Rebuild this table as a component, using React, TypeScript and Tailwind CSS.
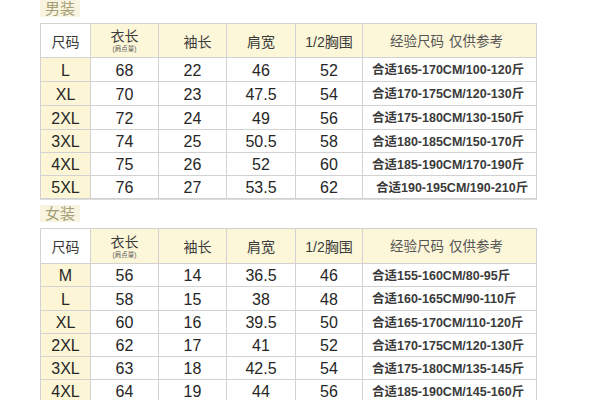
import React from "react";

type Row = { size: string; a: string; b: string; c: string; d: string; rec: string; h: number; pad?: number };

const men: Row[] = [
  { size: "L", a: "68", b: "22", c: "46", d: "52", rec: "合适165-170CM/100-120斤", h: 24 },
  { size: "XL", a: "70", b: "23", c: "47.5", d: "54", rec: "合适170-175CM/120-130斤", h: 24 },
  { size: "2XL", a: "72", b: "24", c: "49", d: "56", rec: "合适175-180CM/130-150斤", h: 24 },
  { size: "3XL", a: "74", b: "25", c: "50.5", d: "58", rec: "合适180-185CM/150-170斤", h: 23 },
  { size: "4XL", a: "75", b: "26", c: "52", d: "60", rec: "合适185-190CM/170-190斤", h: 23 },
  { size: "5XL", a: "76", b: "27", c: "53.5", d: "62", rec: "合适190-195CM/190-210斤", h: 23, pad: 13 },
];

const women: Row[] = [
  { size: "M", a: "56", b: "14", c: "36.5", d: "46", rec: "合适155-160CM/80-95斤", h: 23 },
  { size: "L", a: "58", b: "15", c: "38", d: "48", rec: "合适160-165CM/90-110斤", h: 24 },
  { size: "XL", a: "60", b: "16", c: "39.5", d: "50", rec: "合适165-170CM/110-120斤", h: 23 },
  { size: "2XL", a: "62", b: "17", c: "41", d: "52", rec: "合适170-175CM/120-130斤", h: 23 },
  { size: "3XL", a: "63", b: "18", c: "42.5", d: "54", rec: "合适175-180CM/135-145斤", h: 23 },
  { size: "4XL", a: "64", b: "19", c: "44", d: "56", rec: "合适185-190CM/145-160斤", h: 23 },
];

const font = { fontFamily: '"Liberation Sans", Arial, "Noto Sans CJK SC", sans-serif' };

function Label({ text }: { text: string }) {
  return (
    <div className="w-[40px] h-[17px] bg-[#f8f4df] flex items-center justify-center text-[15px] leading-none text-[#a59f78] tracking-[0px]">
      {text}
    </div>
  );
}

function Table({ rows, headH }: { rows: Row[]; headH: number }) {
  const cell = "border-r border-b border-[#d2d2d2] flex items-center justify-center shrink-0";
  return (
    <div className="w-[497px] border-t border-l border-[#d2d2d2] shadow-[0_1px_0_#dcdcdc]">
      <div className="flex" style={{ height: headH }}>
        <div className={`${cell} w-[50px] bg-white text-[14px] text-[#3a3a3a] pt-[3px]`}>尺码</div>
        <div className={`${cell} w-[68px] bg-[#fdf7d9] flex-col text-[#3a3a3a]`}>
          <span className="text-[14px] leading-[16px]">衣长</span>
          <span className="text-[6.5px] leading-[8px] text-[#555] mt-[1px]">(肩点量)</span>
        </div>
        <div className={`${cell} w-[68px] bg-[#fdf7d9] text-[14px] text-[#3a3a3a] pt-[3px] pl-[10px]`}>袖长</div>
        <div className={`${cell} w-[69px] bg-[#fdf7d9] text-[14px] text-[#3a3a3a] pt-[3px]`}>肩宽</div>
        <div className={`${cell} w-[67px] bg-[#fdf7d9] text-[14px] text-[#3a3a3a] pt-[3px]`}>1/2胸围</div>
        <div className={`${cell} w-[174px] bg-[#fdf7d9] text-[13.5px] text-[#555] pt-[3px] pr-[6px] gap-[5px]`}>
          <span>经验尺码</span>
          <span>仅供参考</span>
        </div>
      </div>
      {rows.map((r, i) => (
        <div key={i} className="flex text-[#262626]" style={{ height: r.h }}>
          <div className={`${cell} w-[50px] bg-[#fdf6d6] text-[16px] pt-[2px]`}>{r.size}</div>
          <div className={`${cell} w-[68px] bg-white text-[16px] pt-[2px]`}>{r.a}</div>
          <div className={`${cell} w-[68px] bg-white text-[16px] pt-[2px]`}>{r.b}</div>
          <div className={`${cell} w-[69px] bg-white text-[16px] pt-[2px]`}>{r.c}</div>
          <div className={`${cell} w-[67px] bg-white text-[16px] pt-[2px]`}>{r.d}</div>
          <div
            className={`${cell} w-[174px] bg-white text-[12.5px] font-bold text-[#3a3a3a] !justify-start pt-[2px]`}
            style={{ paddingLeft: r.pad ?? 9 }}
          >
            {r.rec}
          </div>
        </div>
      ))}
    </div>
  );
}

export default function App() {
  return (
    <div className="w-[599px] h-[400px] bg-white overflow-hidden" style={font}>
      <div className="ml-[40px] flex flex-col">
        <Label text="男装" />
        <div className="mt-[6px]">
          <Table rows={men} headH={34} />
        </div>
        <div className="mt-[6px]">
          <Label text="女装" />
        </div>
        <div className="mt-[6px]">
          <Table rows={women} headH={35} />
        </div>
      </div>
    </div>
  );
}
